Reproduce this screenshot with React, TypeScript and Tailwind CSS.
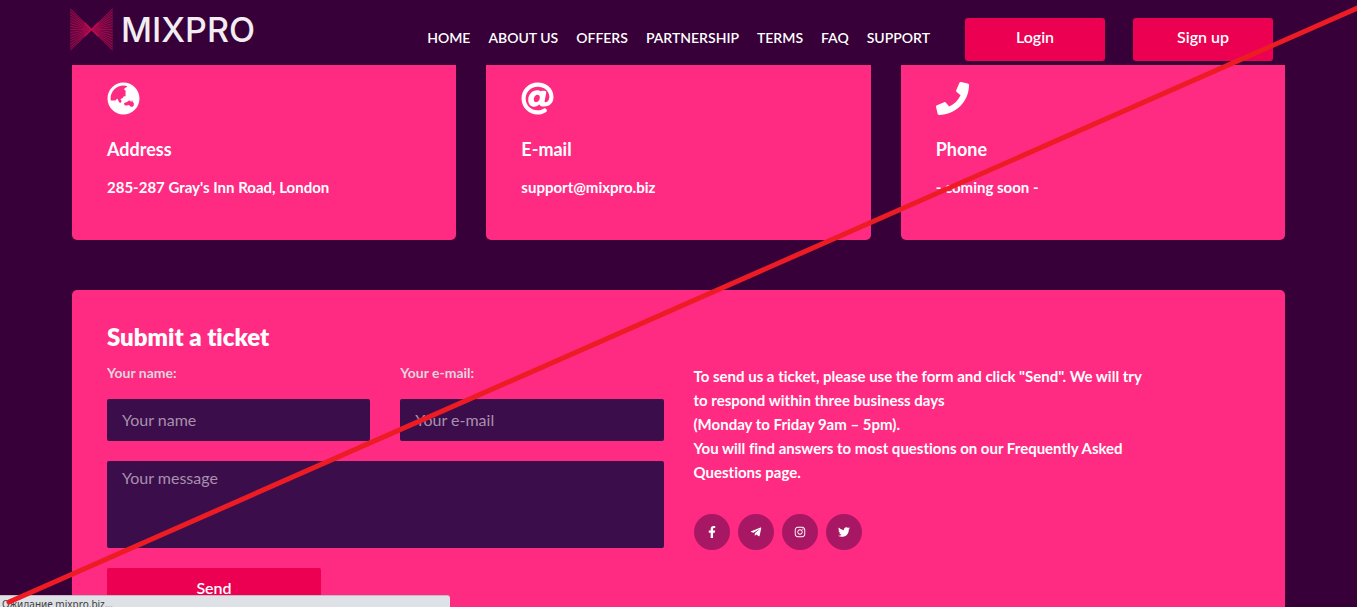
import type { ReactNode } from "react";
import {
  FaAt,
  FaFacebookF,
  FaGlobeAsia,
  FaInstagram,
  FaPhone,
  FaTelegramPlane,
  FaTwitter,
} from "react-icons/fa";

const navItems = ["HOME", "ABOUT US", "OFFERS", "PARTNERSHIP", "TERMS", "FAQ", "SUPPORT"];

const rays = Array.from({ length: 15 }, (_, i) => 1 + i * 3);

function Logo() {
  return (
    <a href="#home" aria-label="MIXPRO" className="flex items-center gap-2">
      <svg width="43" height="43" viewBox="0 0 44 44" fill="none" aria-hidden="true">
        <path d="M0 0L22 22L44 0V44L22 22L0 44Z" fill="#580540" />
        <g stroke="#a80a4b" strokeWidth="0.9">
          {rays.map((y) => (
            <path key={y} d={`M0.5 ${y}L43.5 ${44 - y}`} />
          ))}
        </g>
        <path d="M15 15L22 22L29 15M15 29L22 22L29 29" stroke="#c00a4e" strokeWidth="1.5" />
      </svg>
      <span className="font-[Inter,sans-serif] text-[34px] leading-10 font-medium text-[#f1edf3]">MIXPRO</span>
    </a>
  );
}

function Header() {
  return (
    <header className="relative z-10 flex h-[65px] shrink-0 items-start justify-between bg-[#370038] pr-[84px] pl-[70px]">
      <div className="pt-2">
        <Logo />
      </div>
      <div className="flex items-start gap-[35px] pt-[18px]">
        <nav className="flex gap-[18px] pt-2 text-sm leading-6 font-semibold">
          {navItems.map((item) => (
            <a key={item} href="#" className="whitespace-nowrap">
              {item}
            </a>
          ))}
        </nav>
        <div className="flex gap-7">
          <button className="h-[43px] w-[140px] rounded-[3px] bg-[#eb0052] pb-1.5 text-base font-semibold">Login</button>
          <button className="h-[43px] w-[140px] rounded-[3px] bg-[#eb0052] pb-1.5 text-base font-semibold">Sign up</button>
        </div>
      </div>
    </header>
  );
}

function ContactCard({ icon, title, children }: { icon: ReactNode; title: string; children: ReactNode }) {
  return (
    <article className="h-[175px] rounded-b-[5px] bg-[#ff2a81] px-[35px] pt-[17px]">
      <div className="text-[33px]">{icon}</div>
      <h3 className="mt-5 text-lg leading-7 font-bold">{title}</h3>
      <p className="mt-3 text-[15px] leading-6 font-bold">{children}</p>
    </article>
  );
}

const socials = [
  { name: "Facebook", icon: <FaFacebookF /> },
  { name: "Telegram", icon: <FaTelegramPlane /> },
  { name: "Instagram", icon: <FaInstagram /> },
  { name: "Twitter", icon: <FaTwitter /> },
];

function TicketSection() {
  return (
    <section className="mt-[50px] grid grid-cols-2 gap-x-[30px] rounded-t-[5px] bg-[#ff2a81] px-[35px] pt-[31px] pb-10">
      <h2 className="col-span-2 text-2xl leading-8 font-extrabold">Submit a ticket</h2>
      <form className="grid grid-cols-2 gap-x-[30px] gap-y-5 pt-2.5">
        <div className="flex flex-col gap-4">
          <label htmlFor="name" className="text-sm leading-5 font-bold text-[#e3d5df]">Your name:</label>
          <input id="name" placeholder="Your name" className="h-[42px] w-full rounded-xs bg-[#3b0e4b] px-[15px] pb-0.5 text-base placeholder:text-[#a890ae]" />
        </div>
        <div className="flex flex-col gap-4">
          <label htmlFor="email" className="text-sm leading-5 font-bold text-[#e3d5df]">Your e-mail:</label>
          <input id="email" type="email" placeholder="Your e-mail" className="h-[42px] w-full rounded-xs bg-[#3b0e4b] px-[15px] pb-0.5 text-base placeholder:text-[#a890ae]" />
        </div>
        <textarea aria-label="Your message" placeholder="Your message" className="col-span-2 h-[87px] resize-none rounded-xs bg-[#3b0e4b] px-[15px] py-[5px] text-base placeholder:text-[#a890ae]" />
        <button type="button" className="h-[43px] w-[214px] rounded-xs bg-[#eb0052] pb-1 text-base font-semibold">Send</button>
      </form>
      <div className="pt-[11px]">
        <p className="text-[15px] leading-6 font-bold">
          To send us a ticket, please use the form and click "Send". We will try
          <br />
          to respond within three business days
          <br />
          (Monday to Friday 9am – 5pm).
          <br />
          You will find answers to most questions on our Frequently Asked
          <br />
          Questions page.
        </p>
        <div className="mt-[30px] flex gap-2">
          {socials.map((s) => (
            <a key={s.name} href="#" aria-label={s.name} className="flex size-9 items-center justify-center rounded-full bg-[#a81764] text-xs">
              {s.icon}
            </a>
          ))}
        </div>
      </div>
    </section>
  );
}

export default function App() {
  return (
    <div className="relative flex min-h-screen flex-col bg-[#370038] font-[Lato,sans-serif] text-white [font-variant-ligatures:none] h-screen overflow-hidden">
      <Header />
      <main className="px-[72px]">
        <div className="grid grid-cols-3 gap-[30px]">
          <ContactCard icon={<FaGlobeAsia />} title="Address">285-287 Gray's Inn Road, London</ContactCard>
          <ContactCard icon={<FaAt />} title="E-mail">support@mixpro.biz</ContactCard>
          <ContactCard icon={<FaPhone />} title="Phone">- coming soon -</ContactCard>
        </div>
        <TicketSection />
      </main>
      <div className="absolute bottom-0 left-0 z-20 h-3 w-[450px] rounded-tr-[3px] border-t border-[#c9b8c4] bg-[#dee1e6] pl-0.5 font-['Noto_Sans',sans-serif] text-[10px] leading-4 text-[#3c4043]">
        Ожидание mixpro.biz...
      </div>
      <svg className="pointer-events-none absolute inset-0 z-30 size-full" viewBox="0 0 1357 607" preserveAspectRatio="none" aria-hidden="true">
        <path d="M9 602L1360 7" stroke="#ed1c24" strokeWidth="5" strokeLinecap="round" />
      </svg>
    </div>
  );
}
